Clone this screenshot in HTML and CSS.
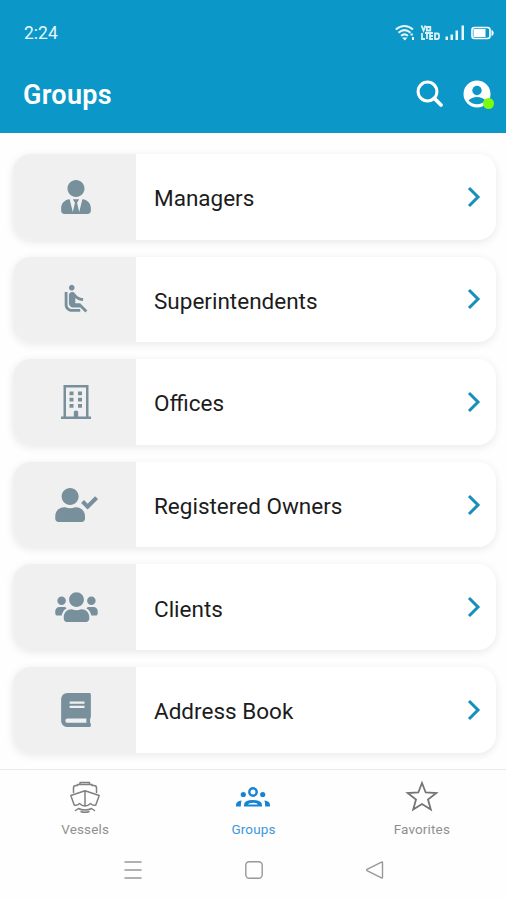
FILE: index.html
```html
<!DOCTYPE html>
<html lang="en">
<head>
<meta charset="utf-8">
<title>Groups</title>
<link rel="stylesheet" href="styles.css">
</head>
<body>
<header class="header">
  <div class="status">
    <span class="time">2:24</span>
    <svg class="status-icons" viewBox="0 0 100 18" fill="none" stroke="#fff">
      <path d="M.8 5.500Q9.500-1.500 18 5.500M3.500 8.700Q9.500 3.500 15.500 8.700M6 11.800Q9.500 9 13 11.800" stroke-width="2" opacity=".9"/>
      <path d="M7 13.500h5.500l-2.700 3zM15.500 9.500h2.300v2h-2.300zM17 13h2v3h-2z" fill="#fff" stroke="none" opacity=".9"/>
      <path d="M26.500 1.500l2 5 2-5M31.800 3h3.500v3.500h-3.500zM27 9v6h3M30 9h4M32 9v6M38 9h-3v6h3M35 12h3M40 9.500h2.500q1.500 0 1.500 1.500v2.500q0 1.500-1.500 1.500H40z" stroke-width="1.800" opacity=".85"/>
      <path d="M50.500 12.500H53V16h-2.500zM55.500 10.500H58V16h-2.500zM60.500 6.500H63V16h-2.500zM66.500 1.500H69V16h-2.500z" fill="#fff" stroke="none" opacity=".9"/>
      <rect x="77" y="3.500" width="18" height="11" rx="2.500" stroke-width="1.600"/>
      <path d="M78.500 5h12v8h-12zM96.500 5.500q4.500 3.500 0 7z" fill="#fff" stroke="none"/>
    </svg>
  </div>
  <div class="toolbar">
    <h1 class="title">Groups</h1>
    <div class="actions">
      <svg class="search" viewBox="0 0 28 28" fill="none" stroke="#fff"><circle cx="11.500" cy="11.500" r="9.400" stroke-width="3"/><path d="M18.500 18.500l6.500 6.500" stroke-width="3.800" stroke-linecap="round"/></svg>
      <div class="avatar">
        <svg viewBox="0 0 28 28"><circle cx="14" cy="14" r="13.500" fill="#fff"/><circle cx="14" cy="10.500" r="4.700" fill="#0b98c8"/><path d="M5.500 20.500q3-3.500 8.500-3.500t8.500 3.500q-3.200 3.700-8.500 3.700t-8.500-3.700z" fill="#0b98c8"/></svg>
        <span class="online"></span>
      </div>
    </div>
  </div>
</header>

<main class="list">
  <a class="card">
    <span class="thumb"><svg class="icon narrow" viewBox="0 0 448 512"><path d="M224 256c70.700 0 128-57.300 128-128S294.700 0 224 0 96 57.300 96 128s57.300 128 128 128zm95.800 32.600L272 480l-32-136 32-56h-96l32 56-32 136-47.800-191.400C56.900 292 0 350.300 0 422.400V464c0 26.500 21.500 48 48 48h352c26.500 0 48-21.500 48-48v-41.600c0-72.100-56.900-130.400-128.200-133.800z"/></svg></span>
    <span class="name">Managers</span>
    <svg class="chevron" viewBox="0 0 16 24"><path d="M3 3l9 9-9 9"/></svg>
  </a>
  <a class="card">
    <span class="thumb"><svg class="icon seat" viewBox="0 0 24 24"><path d="M7.590 5.410c-.78-.78-.78-2.050 0-2.830.78-.78 2.050-.78 2.830 0 .78.78.78 2.050 0 2.830-.79.79-2.050.79-2.830 0zM6 16V7H4v9c0 2.760 2.240 5 5 5h6v-2H9c-1.660 0-3-1.340-3-3zm14 4.070L14.930 15H11.500v-3.680c1.400 1.150 3.600 2.160 5.500 2.160v-2.160c-1.660.02-3.610-.87-4.670-2.040l-1.400-1.550c-.19-.21-.43-.38-.69-.5-.29-.14-.62-.23-.96-.23h-.03C8.010 7 7 8.010 7 9.250V15c0 1.660 1.340 3 3 3h5.070l3.500 3.500L20 20.070z"/></svg></span>
    <span class="name">Superintendents</span>
    <svg class="chevron" viewBox="0 0 16 24"><path d="M3 3l9 9-9 9"/></svg>
  </a>
  <a class="card">
    <span class="thumb"><svg class="icon narrow" viewBox="0 0 30 34"><path fill-rule="evenodd" d="M2.500 0h25v31.500H30V34H0v-2.500h2.500zM5 2.500v29h7.800V27q0-1.500 2.200-1.500t2.200 1.500v4.500H25v-29z"/><path d="M8.500 6.500h4v3.700h-4zM17 6.500h4v3.700h-4zM8.500 12.800h4v3.700h-4zM17 12.800h4v3.700h-4zM8.500 19h4v3.700h-4zM17 19h4v3.700h-4zM13 27q2-2 4 0v4.500h-1v-3h-2v3h-1z"/></svg></span>
    <span class="name">Offices</span>
    <svg class="chevron" viewBox="0 0 16 24"><path d="M3 3l9 9-9 9"/></svg>
  </a>
  <a class="card">
    <span class="thumb"><svg class="icon wide" viewBox="0 0 640 512"><path d="M224 256c70.700 0 128-57.300 128-128S294.700 0 224 0 96 57.300 96 128s57.300 128 128 128zm89.600 32h-16.700c-22.200 10.200-46.900 16-72.900 16s-50.600-5.800-72.900-16h-16.700C60.200 288 0 348.200 0 422.400V464c0 26.500 21.500 48 48 48h352c26.500 0 48-21.500 48-48v-41.600c0-74.200-60.200-134.400-134.400-134.400zm323-128.400l-27.800-28.100c-4.600-4.700-12.100-4.700-16.800-.1l-104.800 104-45.500-45.800c-4.600-4.700-12.100-4.700-16.800-.1l-28.100 27.900c-4.700 4.600-4.700 12.100-.1 16.800l81.700 82.300c4.600 4.700 12.100 4.700 16.800.1l141.300-140.200c4.600-4.700 4.700-12.200.1-16.800z"/></svg></span>
    <span class="name">Registered Owners</span>
    <svg class="chevron" viewBox="0 0 16 24"><path d="M3 3l9 9-9 9"/></svg>
  </a>
  <a class="card">
    <span class="thumb"><svg class="icon wide" viewBox="0 0 640 512"><path d="M96 224c35.300 0 64-28.700 64-64s-28.700-64-64-64-64 28.700-64 64 28.700 64 64 64zm448 0c35.300 0 64-28.700 64-64s-28.700-64-64-64-64 28.700-64 64 28.700 64 64 64zm32 32h-64c-17.600 0-33.500 7.100-45.100 18.600 40.300 22.100 68.900 62 75.100 109.400h66c17.700 0 32-14.300 32-32v-32c0-35.300-28.700-64-64-64zm-256 0c61.900 0 112-50.100 112-112S381.900 32 320 32 208 82.100 208 144s50.100 112 112 112zm76.800 32h-8.300c-20.800 10-43.900 16-68.500 16s-47.600-6-68.500-16h-8.300C179.600 288 128 339.600 128 403.200V432c0 26.500 21.500 48 48 48h288c26.500 0 48-21.500 48-48v-28.800c0-63.600-51.600-115.200-115.200-115.200zm-223.700-13.400C161.500 263.100 145.600 256 128 256H64c-35.300 0-64 28.700-64 64v32c0 17.700 14.300 32 32 32h65.900c6.300-47.400 34.900-87.300 75.200-109.400z"/></svg></span>
    <span class="name">Clients</span>
    <svg class="chevron" viewBox="0 0 16 24"><path d="M3 3l9 9-9 9"/></svg>
  </a>
  <a class="card">
    <span class="thumb"><svg class="icon narrow" viewBox="0 0 448 512"><path fill-rule="evenodd" d="M448 360V24c0-13.300-10.700-24-24-24H96C43 0 0 43 0 96v320c0 53 43 96 96 96h328c13.300 0 24-10.700 24-24v-16c0-7.500-3.500-14.300-8.900-18.700-4.200-15.400-4.200-59.300 0-74.700 5.400-4.300 8.900-11.100 8.900-18.600zM128 128h224v32H128zM128 192h224v32H128zM381.400 448H96c-17.700 0-32-14.300-32-32 0-17.600 14.400-32 32-32h285.400c-1.900 17.100-1.900 46.900 0 64z"/></svg></span>
    <span class="name">Address Book</span>
    <svg class="chevron" viewBox="0 0 16 24"><path d="M3 3l9 9-9 9"/></svg>
  </a>
</main>

<nav class="tabs">
  <a class="tab">
    <svg class="tab-icon" viewBox="0 0 34 34" fill="none" stroke="#808080" stroke-width="1.500" stroke-linejoin="round" stroke-linecap="round"><path d="M12 4.500V2.500h9.500v2M5.500 12.500V8q0-2.500 2.500-2.500h1.500V4.500h14.500v1H26q2.500 0 2.500 2.500v4.500M2.800 15.500L17 10.800l14.200 4.700L27.800 25q-2.800 1-5.300-1.500-2.500 2.500-5.500 2.500t-5.500-2.500Q9 26 6.200 25zM17 10.800V26M7.500 30.500l3-2q2.500 1.500 6.500 1.500t6.500-1.500l3 2M13 31.800q4 1 8 0"/></svg>
    <span>Vessels</span>
  </a>
  <a class="tab active">
    <svg class="tab-icon" viewBox="0 0 34 34" fill="#1783d3"><circle cx="17" cy="12" r="3.700" fill="none" stroke="#1783d3" stroke-width="2.400"/><circle cx="7.300" cy="14.500" r="2.600"/><circle cx="26.700" cy="14.500" r="2.600"/><path fill-rule="evenodd" d="M8 26.500V25q0-5 9-5t9 5v1.500zM12 24.500h10q-1-1.800-5-1.800t-5 1.800zM0 26.500v-1.500q0-4 5.500-4.500Q4.800 23 4.800 26.500zM34 26.500v-1.500q0-4-5.500-4.500.7 2.500.7 6z"/></svg>
    <span>Groups</span>
  </a>
  <a class="tab">
    <svg class="tab-icon" viewBox="0 0 34 34" fill="none" stroke="#747474" stroke-width="1.800"><path d="M17 3l3.700 9.500 10.600.5-8.300 6.600 2.800 10L17 24l-8.800 5.600 2.800-10L2.700 13l10.600-.5z"/></svg>
    <span>Favorites</span>
  </a>
</nav>

<div class="sysnav">
  <svg viewBox="0 0 20 20"><path d="M1.500 2h17M1.500 10h17M1.500 18h17"/></svg>
  <svg viewBox="0 0 20 20"><rect x="1.800" y="1.800" width="16.400" height="16.400" rx="3.500"/></svg>
  <svg viewBox="0 0 20 20"><path d="M17.500 2.500v15q0 .8-1 .3L2 10.600q-.8-.6 0-1.200l14.500-7.200q1-.5 1 .3z"/></svg>
</div>
</body>
</html>
```

FILE: styles.css
```css
* { box-sizing: border-box; }

body {
  margin: 0;
  height: 900px;
  display: flex;
  flex-direction: column;
  overflow: hidden;
  background: #fefefe;
  font-family: Roboto, "Liberation Sans", sans-serif;
}

svg { display: block; flex: none; }

.header {
  height: 133px;
  flex: none;
  background: #0b98c8;
  color: #fff;
}

.status {
  height: 66px;
  padding: 0 11px 0 24px;
  display: flex;
  align-items: center;
  justify-content: space-between;
}

.time { font-size: 17.5px; color: #e8f7fc; }
.status-icons { width: 100px; height: 18px; }

.toolbar {
  height: 56px;
  padding: 0 15px 0 23px;
  display: flex;
  align-items: center;
  justify-content: space-between;
}

.title { margin: 2px 0 0; font-size: 27px; font-weight: 600; letter-spacing: 0.3px; }
.actions { display: flex; align-items: center; gap: 19px; }
.search { width: 28px; height: 28px; }
.avatar { position: relative; width: 28px; height: 28px; }

.online {
  position: absolute;
  left: 20px;
  top: 18px;
  width: 11px;
  height: 11px;
  border-radius: 50%;
  background: #7cfc0a;
}

.list {
  height: 636px;
  flex: none;
  padding: 21px 10px 0 13px;
  display: flex;
  flex-direction: column;
  gap: 17px;
}

.card {
  height: 85.6px;
  flex: none;
  display: flex;
  align-items: center;
  padding-right: 14px;
  border-radius: 18px;
  overflow: hidden;
  background: #fff;
  box-shadow: 0 2px 8px rgba(0, 0, 0, 0.09);
}

.thumb {
  width: 123px;
  height: 100%;
  display: flex;
  align-items: center;
  justify-content: center;
  padding-left: 3px;
  background: #f0f0f0;
}

.icon { fill: #78909c; }
.narrow { width: 30px; height: 34px; }
.wide { width: 43px; height: 34px; }
.seat { width: 34px; height: 34px; }

.name {
  flex: 1;
  padding: 3px 0 0 18px;
  font-size: 22.5px;
  letter-spacing: 0;
  color: #1c1c1c;
}

.chevron {
  width: 16px;
  height: 24px;
  fill: none;
  stroke: #168fbd;
  stroke-width: 3;
}

.tabs {
  height: 76px;
  flex: none;
  display: grid;
  grid-template-columns: repeat(3, 1fr);
  padding: 10px 0 0 1px;
  border-top: 1px solid #e9e9e9;
}

.tab {
  display: flex;
  flex-direction: column;
  align-items: center;
  gap: 7px;
  font-size: 13.5px;
  line-height: 16px;
  letter-spacing: 0.15px;
  color: #909090;
}

.active { color: #3c98da; }
.tab-icon { width: 34px; height: 34px; }

.sysnav {
  display: flex;
  justify-content: center;
  gap: 101px;
  padding: 15px 0 0 1px;
}

.sysnav svg {
  width: 20px;
  height: 20px;
  fill: none;
  stroke: #989898;
  stroke-width: 1.4;
}
```
